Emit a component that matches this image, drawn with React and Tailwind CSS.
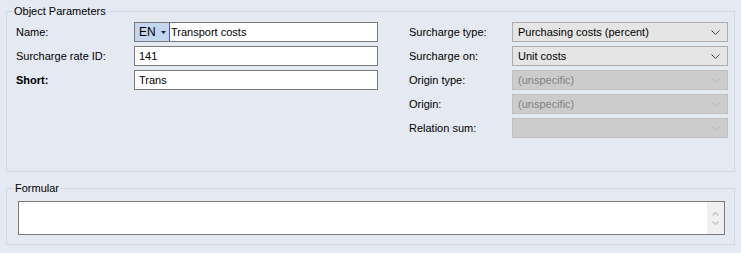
import React from 'react';

const font = { fontFamily: '"Liberation Sans", Arial, sans-serif' };

const Chevron = ({ color }) => (
  <svg width="9" height="5" viewBox="0 0 9 5" className="shrink-0">
    <path d="M0.5 0.5 L4.5 4.5 L8.5 0.5" fill="none" stroke={color} strokeWidth="1" />
  </svg>
);

const Combo = ({ value, disabled }) => (
  <div
    className={`w-[216px] h-[20px] flex items-center justify-between pl-[5px] pr-[7px] border ${
      disabled ? 'bg-[#cccccc] border-[#bfbfbf] text-[#838383]' : 'bg-[#e5e5e5] border-[#adadad] text-black'
    }`}
  >
    <span className="truncate">{value}</span>
    <Chevron color={disabled ? '#b3b3b3' : '#444444'} />
  </div>
);

const TextBox = ({ children }) => (
  <div className="w-[244px] h-[20px] flex items-center bg-white border border-[#7a7a7a]">{children}</div>
);

const App = () => {
  const leftRows = [
    { label: 'Name:', content: (
      <TextBox>
        <div className="h-full w-[34px] bg-[#c4d5ee] flex items-center pl-[4px] gap-[5px]">
          <span className="text-[12px]">EN</span>
          <svg width="5" height="3" viewBox="0 0 5 3"><path d="M0 0 H5 L2.5 3 Z" fill="#222" /></svg>
        </div>
        <div className="h-full w-[1px] bg-[#2f62c8]" />
        <span className="pl-[1px]">Transport costs</span>
      </TextBox>
    ) },
    { label: 'Surcharge rate ID:', content: <TextBox><span className="pl-[4px]">141</span></TextBox> },
    { label: 'Short:', bold: true, content: <TextBox><span className="pl-[4px]">Trans</span></TextBox> },
  ];

  const rightRows = [
    { label: 'Surcharge type:', value: 'Purchasing costs (percent)' },
    { label: 'Surcharge on:', value: 'Unit costs' },
    { label: 'Origin type:', value: '(unspecific)', disabled: true },
    { label: 'Origin:', value: '(unspecific)', disabled: true },
    { label: 'Relation sum:', value: '', disabled: true },
  ];

  return (
    <div className="w-[741px] h-[253px] bg-[#e5e9f1] text-[11px] leading-[14px] text-black px-[6px] pt-[4px]" style={font}>
      {/* Object Parameters group */}
      <fieldset className="border border-[#d3d8df] pl-[9px] pr-[4px] pt-[4px] pb-[33px]">
        <legend className="-ml-[3px] px-[1px] leading-[14px]">Object Parameters</legend>
        <div className="flex">
          <div className="flex flex-col gap-[4px]">
            {leftRows.map((r) => (
              <div key={r.label} className="flex items-center h-[20px]">
                <span className={`w-[118px] ${r.bold ? 'font-bold' : ''}`}>{r.label}</span>
                {r.content}
              </div>
            ))}
          </div>
          <div className="flex flex-col gap-[4px] ml-[31px]">
            {rightRows.map((r) => (
              <div key={r.label} className="flex items-center h-[20px]">
                <span className="w-[103px]">{r.label}</span>
                <Combo value={r.value} disabled={r.disabled} />
              </div>
            ))}
          </div>
        </div>
      </fieldset>

      {/* Formular group */}
      <fieldset className="mt-[9px] border border-[#d3d8df] pl-[11px] pr-[9px] pt-[6px] pb-[9px]">
        <legend className="-ml-[4px] px-[1px] leading-[14px]">Formular</legend>
        <div className="h-[34px] bg-white border border-[#7a7a7a] flex justify-end">
          <div className="w-[17px] h-full bg-[#f0f0f0] flex flex-col items-center justify-center gap-[5px]">
            <svg width="7" height="4" viewBox="0 0 7 4"><path d="M0.5 3.5 L3.5 0.5 L6.5 3.5" fill="none" stroke="#c2c2c2" strokeWidth="1.2" /></svg>
            <svg width="7" height="4" viewBox="0 0 7 4"><path d="M0.5 0.5 L3.5 3.5 L6.5 0.5" fill="none" stroke="#c2c2c2" strokeWidth="1.2" /></svg>
          </div>
        </div>
      </fieldset>
    </div>
  );
};

export default App;
